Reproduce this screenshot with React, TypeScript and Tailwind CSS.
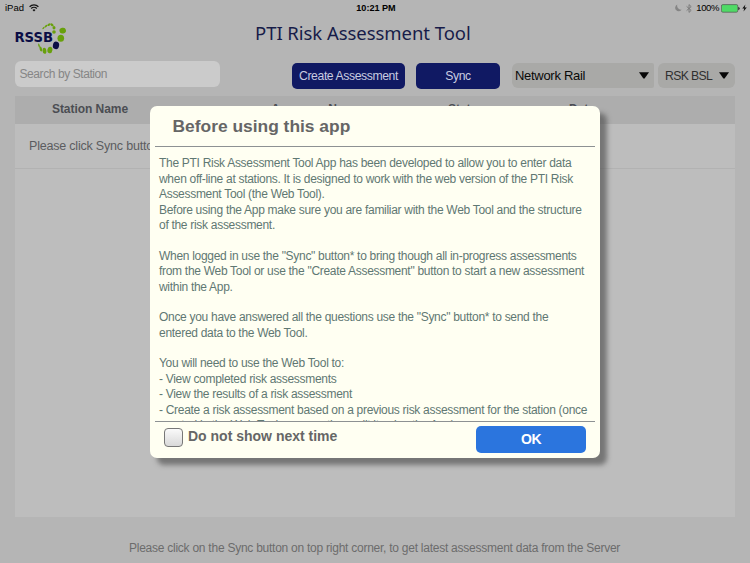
import React from "react";

const guideLines = [
  "The PTI Risk Assessment Tool App has been developed to allow you to enter data",
  "when off-line at stations. It is designed to work with the web version of the PTI Risk",
  "Assessment Tool (the Web Tool).",
  "Before using the App make sure you are familiar with the Web Tool and the structure",
  "of the risk assessment.",
  "",
  "When logged in use the \"Sync\" button* to bring though all in-progress assessments",
  "from the Web Tool or use the \"Create Assessment\" button to start a new assessment",
  "within the App.",
  "",
  "Once you have answered all the questions use the \"Sync\" button* to send the",
  "entered data to the Web Tool.",
  "",
  "You will need to use the Web Tool to:",
  "- View completed risk assessments",
  "- View the results of a risk assessment",
  "- Create a risk assessment based on a previous risk assessment for the station (once",
  "created in the Web Tool, you can then edit it using the App)",
];

function StatusBar() {
  return (
    <div className="grid h-4 grid-cols-3 items-center pl-[5px] pr-[3px] text-[9.5px] leading-4 text-black">
      <div className="flex items-center gap-[5px]">
        <span>iPad</span>
        <svg width="10" height="8" viewBox="0 0 10 8" fill="none" stroke="#111" strokeWidth="1.25">
          <path d="M0.6 2.8a6.2 6.2 0 0 1 8.8 0" />
          <path d="M2.2 4.5a4 4 0 0 1 5.6 0" />
          <path d="M5 7.6 3.5 6a2.2 2.2 0 0 1 3 0z" fill="#111" stroke="none" />
        </svg>
      </div>
      <div className="text-center text-[9.1px] font-bold">10:21 PM</div>
      <div className="flex items-center justify-end">
        <svg className="mr-[4px]" width="7" height="8" viewBox="0 0 7 8">
          <path d="M2.3 0.6A3.5 3.5 0 1 0 6.7 5.6 3.9 3.9 0 0 1 2.3 0.6z" fill="#858585" />
        </svg>
        <svg className="mr-[4px]" width="6" height="9" viewBox="0 0 6 9" fill="none" stroke="#777" strokeWidth="0.9">
          <path d="M0.6 2.4 5.2 6.4 3 8.4V0.6L5.2 2.6 0.6 6.6" />
        </svg>
        <span className="mr-[2px] tracking-[-0.4px]">100%</span>
        <svg className="mr-[2px]" width="19" height="9" viewBox="0 0 19 9">
          <rect x="0.4" y="0.6" width="16.4" height="7.6" rx="1.4" fill="#4fda66" stroke="#555" strokeWidth="0.7" />
          <path d="M17.4 3v3c1-.3 1.2-.9 1.2-1.5s-.2-1.2-1.2-1.5z" fill="#111" />
        </svg>
        <svg width="5" height="8" viewBox="0 0 5 8">
          <path d="M3.4 0.6 0.3 4.5h1.9L1.5 7.4 4.8 3.4H2.7z" fill="#111" />
        </svg>
      </div>
    </div>
  );
}

function Logo() {
  return (
    <svg className="shrink-0" width="54" height="34" viewBox="0 0 54 34">
      <g fill="#68a00c">
        <ellipse cx="28.5" cy="6" rx="0.7" ry="1.4" transform="rotate(45 28.5 6)" />
        <ellipse cx="31" cy="4.2" rx="0.9" ry="1.7" transform="rotate(45 31 4.2)" />
        <ellipse cx="34" cy="2.6" rx="1.1" ry="1.8" transform="rotate(55 34 2.6)" />
        <ellipse cx="37" cy="2.8" rx="1.2" ry="1.8" transform="rotate(-50 37 2.8)" />
        <ellipse cx="39" cy="5.8" rx="1.5" ry="1.8" />
        <ellipse cx="39" cy="10" rx="1.8" ry="1.7" />
        <ellipse cx="47.7" cy="8.6" rx="3.3" ry="2.9" transform="rotate(-12 47.7 8.6)" />
        <ellipse cx="45.8" cy="16.2" rx="3.3" ry="3.5" />
        <ellipse cx="34.9" cy="28" rx="2.5" ry="3.3" transform="rotate(10 34.9 28)" />
        <ellipse cx="29.5" cy="28.8" rx="1.9" ry="3" transform="rotate(-5 29.5 28.8)" />
        <ellipse cx="25.8" cy="27" rx="1.2" ry="2.6" transform="rotate(-15 25.8 27)" />
        <ellipse cx="24" cy="23.5" rx="0.7" ry="2" transform="rotate(-15 24 23.5)" />
      </g>
      <ellipse cx="41" cy="23.4" rx="3.1" ry="3.8" transform="rotate(12 41 23.4)" fill="#0b0d45" />
      <text x="-0.6" y="20" textLength="38.6" lengthAdjust="spacingAndGlyphs" fontFamily="'DejaVu Sans', sans-serif" fontWeight="700" fontSize="14" fill="#0b0d45">RSSB</text>
    </svg>
  );
}

function Arrow() {
  return (
    <svg className="shrink-0" width="10" height="7" viewBox="0 0 10 7">
      <path d="M0 0.3h10L5.6 6.6h-1.2z" fill="#080808" />
    </svg>
  );
}

function Dialog() {
  return (
    <div className="absolute left-[150px] top-[105.5px] flex h-[352px] w-[450px] flex-col rounded-[7px] bg-[#fffff2] px-[5px] shadow-[7px_7px_5px_rgba(80,80,80,0.65)]">
      <h2 className="h-[41px] border-b border-[#8d9193] pl-[17.5px] text-[17.4px] font-bold leading-[40px] text-[#666]">Before using this app</h2>
      <div className="h-[274.5px] overflow-hidden pl-1 pt-[9.9px] text-[12px] leading-[15.4px] tracking-[-0.295px] text-[#5f7873]">
        {guideLines.map((line, i) => (
          <p key={i} className="h-[15.4px] whitespace-nowrap">{line}</p>
        ))}
      </div>
      <div className="flex flex-1 justify-between border-t border-[#8d9193] pl-[9px] pr-[9px]">
        <label className="flex pt-[6px]">
          <span className="h-[19px] w-[19px] rounded-[4px] border border-[#777] bg-linear-to-b from-[#fafafa] to-[#d9d9d9]" />
          <span className="pl-[5px] text-[14px] font-bold leading-[17px] text-[#666]">Do not show next time</span>
        </label>
        <button className="mt-[4px] h-[27px] w-[110px] rounded-[5px] bg-[#2b75de] text-[14px] font-bold leading-[27px] tracking-[-0.5px] text-white">OK</button>
      </div>
    </div>
  );
}

export default function App() {
  return (
    <div className="relative flex h-[563px] w-[750px] flex-col overflow-hidden bg-[#b5b5b5] font-['Liberation_Sans',Arial,sans-serif]">
      <StatusBar />
      <header className="flex h-[46px] pl-[15px] pt-[6px]">
        <Logo />
        <h1 className="ml-[186px] mt-[-1px] whitespace-nowrap font-['Noto_Sans',sans-serif] text-[18.5px] leading-[23px] tracking-[-0.05px] text-[#171c49]">PTI Risk Assessment Tool</h1>
      </header>
      <div className="flex h-[34px] pl-[15px] text-[12.2px]">
        <div className="mt-[-1px] h-[25.5px] w-[205px] rounded-[6px] bg-[#cbcbcb] pl-[4.5px] text-[12px] leading-[26px] tracking-[-0.42px] text-[#868686]">Search by Station</div>
        <button className="ml-[72px] mt-[1px] h-[26px] w-[113px] whitespace-nowrap rounded-[5px] bg-[#101963] tracking-[-0.4px] text-[#c9cce0]">Create Assessment</button>
        <button className="ml-[11px] mt-[1px] h-[26px] w-[84px] rounded-[5px] bg-[#101963] tracking-[-0.4px] text-[#c9cce0]">Sync</button>
        <div className="ml-[12px] mt-[1px] flex h-[25px] w-[142px] items-center justify-between rounded-l-[6px] rounded-r-[2px] bg-[#a9a9a7] pl-[3px] pr-[5px] text-[13px] tracking-[-0.3px] text-[#090909]"><span className="pt-[1px]">Network Rail</span><Arrow /></div>
        <div className="ml-[4px] mt-[1px] flex h-[25px] w-[77px] items-center justify-between whitespace-nowrap rounded-[6px] bg-[#a9a9a7] pl-[7px] pr-[6px] tracking-[-0.6px] text-[#303030]"><span className="pt-[1px]">RSK BSL</span><Arrow /></div>
      </div>
      <main className="mx-[15px] h-[421px] bg-[#bdbdbd] text-[#4b4d53]">
        <div className="grid h-[28px] grid-cols-[150px_302px_16px_198px_1fr] bg-[#adadad] text-center text-[12px] font-bold leading-[27px] tracking-[-0.05px]">
          <span>Station Name</span>
          <span>Assessor Name</span>
          <span className="-ml-[19px]">Status</span>
          <span>Date</span>
        </div>
        <div className="h-[45px] border-b border-[#b2b2b2] pl-[14px] text-[12.5px] leading-[44px] tracking-[-0.2px] text-[#5b5c60]">Please click Sync button to get the latest data</div>
      </main>
      <footer className="pl-[129px] pt-[22px] text-[12px] leading-[18px] tracking-[-0.25px] text-[#6c6c6c]">Please click on the Sync button on top right corner, to get latest assessment data from the Server</footer>
      <Dialog />
    </div>
  );
}
